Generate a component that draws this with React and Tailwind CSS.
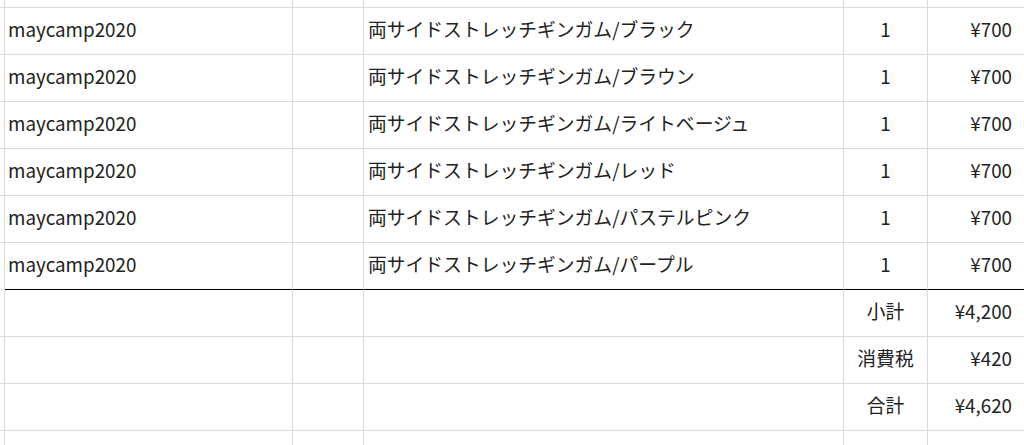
import React from "react";

const items = ["ブラック", "ブラウン", "ライトベージュ", "レッド", "パステルピンク", "パープル"];
const totals = [["小計", "¥4,200"], ["消費税", "¥420"], ["合計", "¥4,620"]];

function Row({ a = "", b = "", c = "", e = "", last = false, h = "h-[47px]" }) {
  const bb = last ? "border-b-black" : "border-b-[#dadada]";
  const cell = `border-b border-r border-r-[#dadada] ${bb} ${h} flex items-center pb-[3px]`;
  return (
    <div className="flex">
      <div className={`border-b border-r border-[#dadada] ${h} w-[5px] shrink-0`}></div>
      <div className={`${cell} w-[288px] shrink-0 pl-[3px]`}>{a}</div>
      <div className={`${cell} w-[71px] shrink-0`}></div>
      <div className={`${cell} w-[480px] shrink-0 pl-[4px]`}>{b}</div>
      <div className={`${cell} w-[84px] shrink-0 justify-center`}>{c}</div>
      <div className={`${cell} flex-1 justify-end pr-[12px] border-r-0`}>{e}</div>
    </div>
  );
}

export default function App() {
  return (
    <div
      className="w-[1024px] h-[445px] overflow-hidden bg-white text-[#222] text-[18.8px] leading-none"
      style={{ fontFamily: '"Noto Sans CJK JP", "Noto Sans", sans-serif' }}
    >
      <Row h="h-[8px]" />
      {items.map((it, i) => (
        <Row
          key={i}
          a="maycamp2020"
          b={`両サイドストレッチギンガム/${it}`}
          c="1"
          e="¥700"
          last={i === items.length - 1}
        />
      ))}
      {totals.map(([k, v]) => (
        <Row key={k} c={k} e={v} />
      ))}
      <Row h="h-[20px]" />
    </div>
  );
}
